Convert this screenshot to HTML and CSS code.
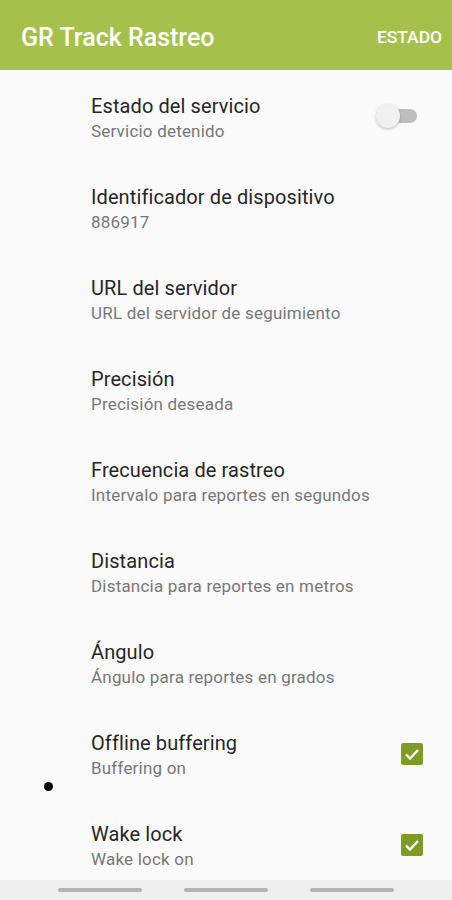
FILE: index.html
```html
<!DOCTYPE html>
<html lang="es">
<head>
    <meta charset="UTF-8">
    <meta name="viewport" content="width=device-width, initial-scale=1.0">
    <title>GR Track Rastreo</title>
    <link rel="stylesheet" href="styles.css">
</head>
<body>
    <div class="screen">
        <header class="appbar">
            <h1 class="appbar-title">GR Track Rastreo</h1>
            <span class="appbar-action">ESTADO</span>
        </header>

        <ul class="prefs">
            <li class="pref">
                <div class="pref-text">
                    <div class="pref-title">Estado del servicio</div>
                    <div class="pref-summary">Servicio detenido</div>
                </div>
                <div class="switch"><span class="switch-track"></span><span class="switch-thumb"></span></div>
            </li>
            <li class="pref">
                <div class="pref-text">
                    <div class="pref-title">Identificador de dispositivo</div>
                    <div class="pref-summary">886917</div>
                </div>
            </li>
            <li class="pref">
                <div class="pref-text">
                    <div class="pref-title">URL del servidor</div>
                    <div class="pref-summary">URL del servidor de seguimiento</div>
                </div>
            </li>
            <li class="pref">
                <div class="pref-text">
                    <div class="pref-title">Precisión</div>
                    <div class="pref-summary">Precisión deseada</div>
                </div>
            </li>
            <li class="pref">
                <div class="pref-text">
                    <div class="pref-title">Frecuencia de rastreo</div>
                    <div class="pref-summary">Intervalo para reportes en segundos</div>
                </div>
            </li>
            <li class="pref">
                <div class="pref-text">
                    <div class="pref-title">Distancia</div>
                    <div class="pref-summary">Distancia para reportes en metros</div>
                </div>
            </li>
            <li class="pref">
                <div class="pref-text">
                    <div class="pref-title">Ángulo</div>
                    <div class="pref-summary">Ángulo para reportes en grados</div>
                </div>
            </li>
            <li class="pref">
                <div class="pref-text">
                    <div class="pref-title">Offline buffering</div>
                    <div class="pref-summary">Buffering on</div>
                </div>
                <span class="checkbox">
                    <svg viewBox="0 0 22 22" width="22" height="22"><path d="M5 11.5l4 4 8-8.5" fill="none" stroke="#fff" stroke-width="2.4"/></svg>
                </span>
                <span class="touch-dot"></span>
            </li>
            <li class="pref">
                <div class="pref-text">
                    <div class="pref-title">Wake lock</div>
                    <div class="pref-summary">Wake lock on</div>
                </div>
                <span class="checkbox">
                    <svg viewBox="0 0 22 22" width="22" height="22"><path d="M5 11.5l4 4 8-8.5" fill="none" stroke="#fff" stroke-width="2.4"/></svg>
                </span>
            </li>
        </ul>

        <div class="navbar">
            <span class="nav-handle"></span>
            <span class="nav-handle"></span>
            <span class="nav-handle"></span>
        </div>
    </div>
</body>
</html>
```

FILE: styles.css
```css
body {
    margin: 0;
    padding: 0;
    font-family: Roboto, "Noto Sans", Arial, sans-serif;
    background-color: #fafafa;
}
.screen {
    width: 452px;
    height: 900px;
    display: flex;
    flex-direction: column;
    overflow: hidden;
}
.appbar {
    height: 70px;
    flex-shrink: 0;
    background-color: #a6c14b;
    display: flex;
    align-items: center;
    justify-content: space-between;
    padding: 4px 10px 0 21px;
    box-sizing: border-box;
}
.appbar-title {
    margin: 0;
    font-size: 25px;
    font-weight: 500;
    color: #fff;
}
.appbar-action {
    font-size: 17.4px;
    font-weight: 500;
    color: #fff;
}
.prefs {
    list-style: none;
    margin: 0;
    padding: 0;
    flex: 1;
    min-height: 0;
}
.pref {
    position: relative;
    height: 91px;
    display: flex;
    align-items: center;
    padding: 4px 29px 0 91px;
    box-sizing: border-box;
}
.pref-text {
    flex: 1;
}
.pref-title {
    font-size: 20px;
    letter-spacing: 0.1px;
    color: #262626;
    line-height: 26px;
}
.pref-summary {
    font-size: 17px;
    letter-spacing: 0.2px;
    color: #777;
    line-height: 22px;
    margin-top: 1px;
}
.switch {
    position: relative;
    width: 42px;
    height: 24px;
    margin-right: 5px;
    margin-top: -4px;
}
.switch-track {
    position: absolute;
    left: 8px;
    top: 5px;
    width: 33px;
    height: 14px;
    border-radius: 7px;
    background-color: #bdbdbd;
}
.switch-thumb {
    position: absolute;
    left: 0;
    top: 0;
    width: 24px;
    height: 24px;
    border-radius: 50%;
    background-color: #f1f1f1;
    box-shadow: 0 1px 3px rgba(0, 0, 0, 0.25);
}
.checkbox {
    width: 22px;
    height: 22px;
    border-radius: 2px;
    background-color: #7d9b25;
    display: flex;
    margin-top: -2px;
}
.touch-dot {
    position: absolute;
    left: 44px;
    top: 75px;
    width: 9px;
    height: 9px;
    border-radius: 50%;
    background-color: #000;
}
.navbar {
    height: 20px;
    flex-shrink: 0;
    background-color: #efefef;
    display: flex;
    align-items: center;
    justify-content: space-between;
    padding: 0 58px;
}
.nav-handle {
    width: 84px;
    height: 4px;
    border-radius: 2px;
    background-color: #b4b4b4;
}
```
